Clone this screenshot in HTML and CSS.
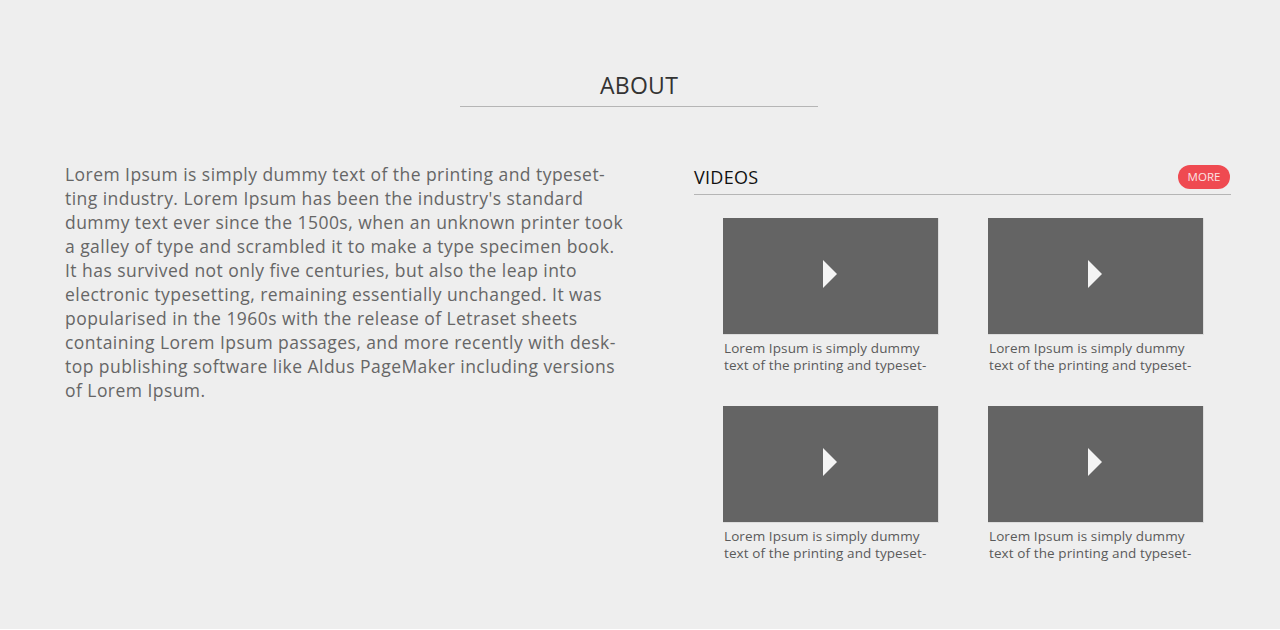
FILE: index.html
```html
<!DOCTYPE html>
<html lang="en">
<head>
<meta charset="utf-8">
<title>About</title>
<link rel="stylesheet" href="styles.css">
</head>
<body>
<section class="about">
  <header class="about-head">
    <h1 class="about-title">ABOUT</h1>
  </header>
  <div class="about-body">
    <p class="about-text">Lorem Ipsum is simply dummy text of the printing and typeset-<br>ting industry. Lorem Ipsum has been the industry's standard<br>dummy text ever since the 1500s, when an unknown printer took<br>a galley of type and scrambled it to make a type specimen book.<br>It has survived not only five centuries, but also the leap into<br>electronic typesetting, remaining essentially unchanged. It was<br>popularised in the 1960s with the release of Letraset sheets<br>containing Lorem Ipsum passages, and more recently with desk-<br>top publishing software like Aldus PageMaker including versions<br>of Lorem Ipsum.</p>
    <div class="videos">
      <div class="videos-head">
        <h2 class="videos-title">VIDEOS</h2>
        <a class="more-btn" href="#">MORE</a>
      </div>
      <div class="video-grid">
        <div class="video">
          <div class="thumb"><svg class="play" width="14" height="28" viewBox="0 0 14 28"><polygon points="0,0 14,14 0,28" fill="#f4f4f4"/></svg></div>
          <p class="caption">Lorem Ipsum is simply dummy<br>text of the printing and typeset-</p>
        </div>
        <div class="video">
          <div class="thumb"><svg class="play" width="14" height="28" viewBox="0 0 14 28"><polygon points="0,0 14,14 0,28" fill="#f4f4f4"/></svg></div>
          <p class="caption">Lorem Ipsum is simply dummy<br>text of the printing and typeset-</p>
        </div>
        <div class="video">
          <div class="thumb"><svg class="play" width="14" height="28" viewBox="0 0 14 28"><polygon points="0,0 14,14 0,28" fill="#f4f4f4"/></svg></div>
          <p class="caption">Lorem Ipsum is simply dummy<br>text of the printing and typeset-</p>
        </div>
        <div class="video">
          <div class="thumb"><svg class="play" width="14" height="28" viewBox="0 0 14 28"><polygon points="0,0 14,14 0,28" fill="#f4f4f4"/></svg></div>
          <p class="caption">Lorem Ipsum is simply dummy<br>text of the printing and typeset-</p>
        </div>
      </div>
    </div>
  </div>
</section>
</body>
</html>
```

FILE: styles.css
```css
* { box-sizing: border-box; }
html, body { margin: 0; padding: 0; background: #ffffff; }
body { font-family: "Open Sans", "Liberation Sans", sans-serif; }

.about {
  height: 629px;
  background: #eeeeee;
  padding-top: 70px;
}

.about-head {
  display: flex;
  justify-content: center;
}
.about-title {
  margin: 0;
  width: 358px;
  margin-left: -2px;
  text-align: center;
  font-size: 23px;
  font-weight: 400;
  color: #333333;
  line-height: 30px;
  padding-bottom: 6px;
  border-bottom: 1px solid #b5b5b5;
  letter-spacing: 0.3px;
}

.about-body {
  display: flex;
  align-items: flex-start;
  padding: 0 49px 0 65px;
  margin-top: 58px;
  gap: 70px;
}

.about-text {
  margin: -3px 0 0;
  width: 559px;
  flex: none;
  font-size: 17.5px;
  letter-spacing: 0.45px;
  line-height: 24px;
  color: #666666;
  white-space: nowrap;
}

.videos { flex: 1; }
.videos-head {
  display: flex;
  align-items: center;
  justify-content: space-between;
  height: 30px;
  border-bottom: 1px solid #b5b5b5;
}
.videos-title {
  margin: 0;
  font-size: 18px;
  font-weight: 400;
  color: #111111;
  line-height: 24px;
  margin-top: -6px;
  letter-spacing: 0.3px;
}
.more-btn {
  display: flex;
  align-items: center;
  justify-content: center;
  width: 52px;
  height: 24px;
  border-radius: 12px;
  background: #ef4a51;
  color: #fbe3e4;
  font-size: 11.5px;
  text-decoration: none;
  margin-top: -6px;
  margin-right: 1px;
}

.video-grid {
  display: grid;
  grid-template-columns: 216px 216px;
  column-gap: 49px;
  row-gap: 32px;
  padding-left: 29px;
  margin-top: 23px;
}
.thumb {
  height: 117px;
  background: #646464;
  display: flex;
  align-items: center;
  justify-content: center;
  border-right: 1px solid #dcdcdc;
  border-bottom: 1px solid #dcdcdc;
}
.play { margin-left: -2px; margin-top: -4px; }
.caption {
  margin: 5px 0 0 1px;
  font-size: 13.5px;
  line-height: 17px;
  color: #5a5a5a;
  white-space: nowrap;
  letter-spacing: 0.1px;
}
```
